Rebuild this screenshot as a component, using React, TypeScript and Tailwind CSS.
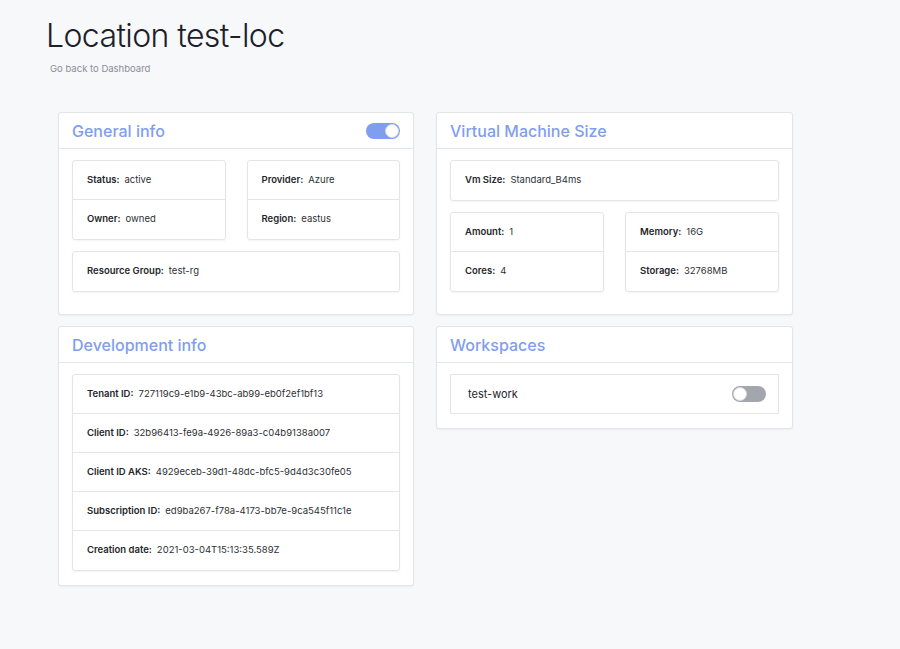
import React from "react";

function Toggle({ on }: { on: boolean }) {
  return (
    <div
      className={
        on
          ? "w-[34px] h-[16px] rounded-full bg-[#7f9ef0] flex items-center justify-end px-[1px]"
          : "w-[34px] h-[16px] rounded-full bg-[#a3a6ad] flex items-center justify-start px-[1px]"
      }
    >
      <div className="w-[14px] h-[14px] rounded-full bg-white border border-[#d6d8dc]" />
    </div>
  );
}

function Card({
  title,
  right,
  children,
  pb,
  w,
}: {
  title: string;
  right?: React.ReactNode;
  children: React.ReactNode;
  pb: string;
  w: string;
}) {
  return (
    <div className={w + " bg-white border border-[#e3e5e9] rounded-[3px] shadow-[0_1px_2px_rgba(0,0,0,0.05)]"}>
      <div className="h-[36px] border-b border-[#e3e5e9] flex items-center justify-between pl-[13px] pr-[13px]">
        <div className="text-[16px] text-[#7f9ef0] font-medium">{title}</div>
        {right}
      </div>
      <div className={"px-[13px] pt-[11px] " + pb}>{children}</div>
    </div>
  );
}

function Box({ rows }: { rows: [string, string][] }) {
  return (
    <div className="border border-[#e3e5e9] rounded-[3px] shadow-[0_1px_2px_rgba(0,0,0,0.05)] divide-y divide-[#e3e5e9]">
      {rows.map(([k, v]) => (
        <div key={k} className="h-[39px] flex items-center pl-[14px] text-[9.5px] text-[#24262b]">
          <span className="font-semibold mr-[5px]">{k}</span>
          <span className="text-[#2e3036]">{v}</span>
        </div>
      ))}
    </div>
  );
}

export default function App() {
  return (
    <div
      className="min-h-[649px] bg-[#f7f8fa] pt-[14px]"
      style={{ fontFamily: "Inter, 'Noto Sans', sans-serif" }}
    >
      <div className="pl-[46px]">
        <h1 className="text-[32px] font-light text-[#1d2029] leading-[44px] tracking-[-0.6px]">
          Location test-loc
        </h1>
        <div className="pl-[4px] mt-[5px] text-[9.5px] text-[#8a8d98] leading-[12px]">Go back to Dashboard</div>
      </div>
      <div className="pl-[58px] mt-[37px] flex gap-[22px] items-start">
        <div className="flex flex-col gap-[11px]">
          <Card w="w-[356px]" title="General info" right={<Toggle on />} pb="pb-[22px]">
            <div className="grid grid-cols-2 gap-x-[21px]">
              <Box rows={[["Status:", "active"], ["Owner:", "owned"]]} />
              <Box rows={[["Provider:", "Azure"], ["Region:", "eastus"]]} />
            </div>
            <div className="mt-[11px]">
              <Box rows={[["Resource Group:", "test-rg"]]} />
            </div>
          </Card>
          <Card w="w-[356px]" title="Development info" pb="pb-[14px]">
            <Box
              rows={[
                ["Tenant ID:", "727119c9-e1b9-43bc-ab99-eb0f2ef1bf13"],
                ["Client ID:", "32b96413-fe9a-4926-89a3-c04b9138a007"],
                ["Client ID AKS:", "4929eceb-39d1-48dc-bfc5-9d4d3c30fe05"],
                ["Subscription ID:", "ed9ba267-f78a-4173-bb7e-9ca545f11c1e"],
                ["Creation date:", "2021-03-04T15:13:35.589Z"],
              ]}
            />
          </Card>
        </div>
        <div className="flex flex-col gap-[11px]">
          <Card w="w-[357px]" title="Virtual Machine Size" pb="pb-[22px]">
            <Box rows={[["Vm Size:", "Standard_B4ms"]]} />
            <div className="grid grid-cols-2 gap-x-[21px] mt-[11px]">
              <Box rows={[["Amount:", "1"], ["Cores:", "4"]]} />
              <Box rows={[["Memory:", "16G"], ["Storage:", "32768MB"]]} />
            </div>
          </Card>
          <Card w="w-[357px]" title="Workspaces" pb="pb-[14px]">
            <div className="border border-[#e3e5e9] h-[40px] flex items-center justify-between pl-[17px] pr-[12px]">
              <span className="text-[11px] text-[#24262b]">test-work</span>
              <Toggle on={false} />
            </div>
          </Card>
        </div>
      </div>
    </div>
  );
}
